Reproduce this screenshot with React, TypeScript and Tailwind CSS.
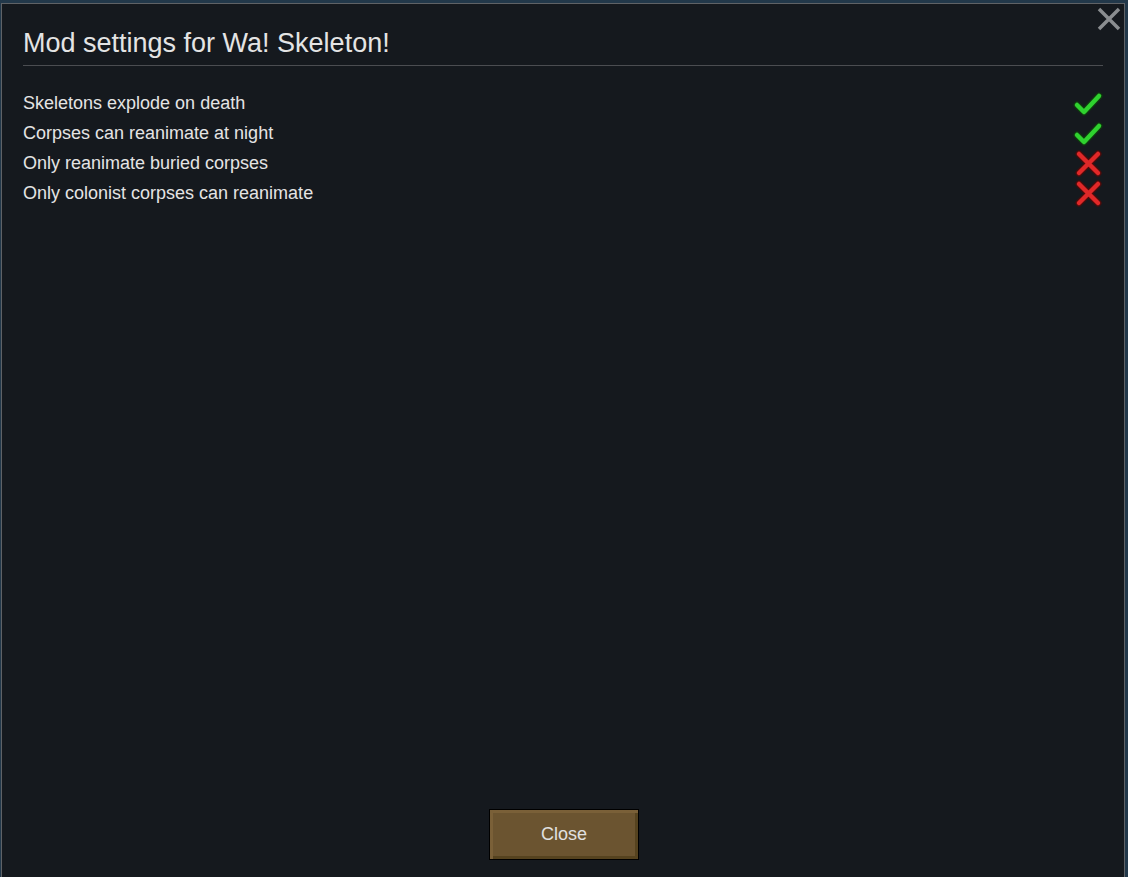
import React from 'react';

interface Setting {
  label: string;
  enabled: boolean;
}

const settings: Setting[] = [
  { label: 'Skeletons explode on death', enabled: true },
  { label: 'Corpses can reanimate at night', enabled: true },
  { label: 'Only reanimate buried corpses', enabled: false },
  { label: 'Only colonist corpses can reanimate', enabled: false },
];

const CheckIcon = () => (
  <svg width="30" height="28" viewBox="0 0 30 28">
    <path d="M4 16 L11 23 L26 7" fill="none" stroke="#0f3a0f" strokeWidth="7" strokeLinecap="round" strokeLinejoin="round" />
    <path d="M4 16 L11 23 L26 7" fill="none" stroke="#2fd22f" strokeWidth="4.5" strokeLinecap="round" strokeLinejoin="round" />
  </svg>
);

const CrossIcon = () => (
  <svg width="30" height="28" viewBox="0 0 30 28">
    <path d="M6 5 L25 24 M25 5 L6 24" fill="none" stroke="#4a0c0c" strokeWidth="7" strokeLinecap="round" />
    <path d="M6 5 L25 24 M25 5 L6 24" fill="none" stroke="#e02828" strokeWidth="4.5" strokeLinecap="round" />
  </svg>
);

export default function App() {
  return (
    <div
      className="w-[1128px] h-[877px] overflow-hidden bg-[#22384a] pt-[3px] pl-[1px]"
      style={{ fontFamily: '"Liberation Sans", Arial, sans-serif' }}
    >
      <div className="relative w-[1124px] h-[900px] bg-[#15191e] border border-[#5f6266] border-b-0">
        {/* close button top right */}
        <div className="absolute right-[3px] top-[3px]">
          <svg width="24" height="24" viewBox="0 0 24 24">
            <path d="M2 2 L22 22 M22 2 L2 22" stroke="#8a8d90" strokeWidth="3.5" />
          </svg>
        </div>

        <div className="pl-[21px] pt-[23px]">
          <h1 className="text-[27px] leading-[32px] text-[#e4e4e4]">Mod settings for Wa! Skeleton!</h1>
          <div className="mt-[6px] h-px bg-[#4b4d51] w-[1080px]" />

          <div className="mt-[22px] flex flex-col">
            {settings.map((s) => (
              <div key={s.label} className="flex items-center justify-between h-[30px] w-[1082px]">
                <span className="text-[18px] text-[#e4e4e4]">{s.label}</span>
                <span className="flex items-center justify-center w-[30px] mr-[2px]">
                  {s.enabled ? <CheckIcon /> : <CrossIcon />}
                </span>
              </div>
            ))}
          </div>
        </div>

        <div className="absolute left-[487px] top-[805px]">
          <button className="w-[150px] h-[51px] border border-black bg-[#6b5430] text-[18px] text-[#e0e0e0] shadow-[inset_3px_3px_0_#7a6038,inset_-3px_-3px_0_#56431f]">
            Close
          </button>
        </div>
      </div>
    </div>
  );
}
